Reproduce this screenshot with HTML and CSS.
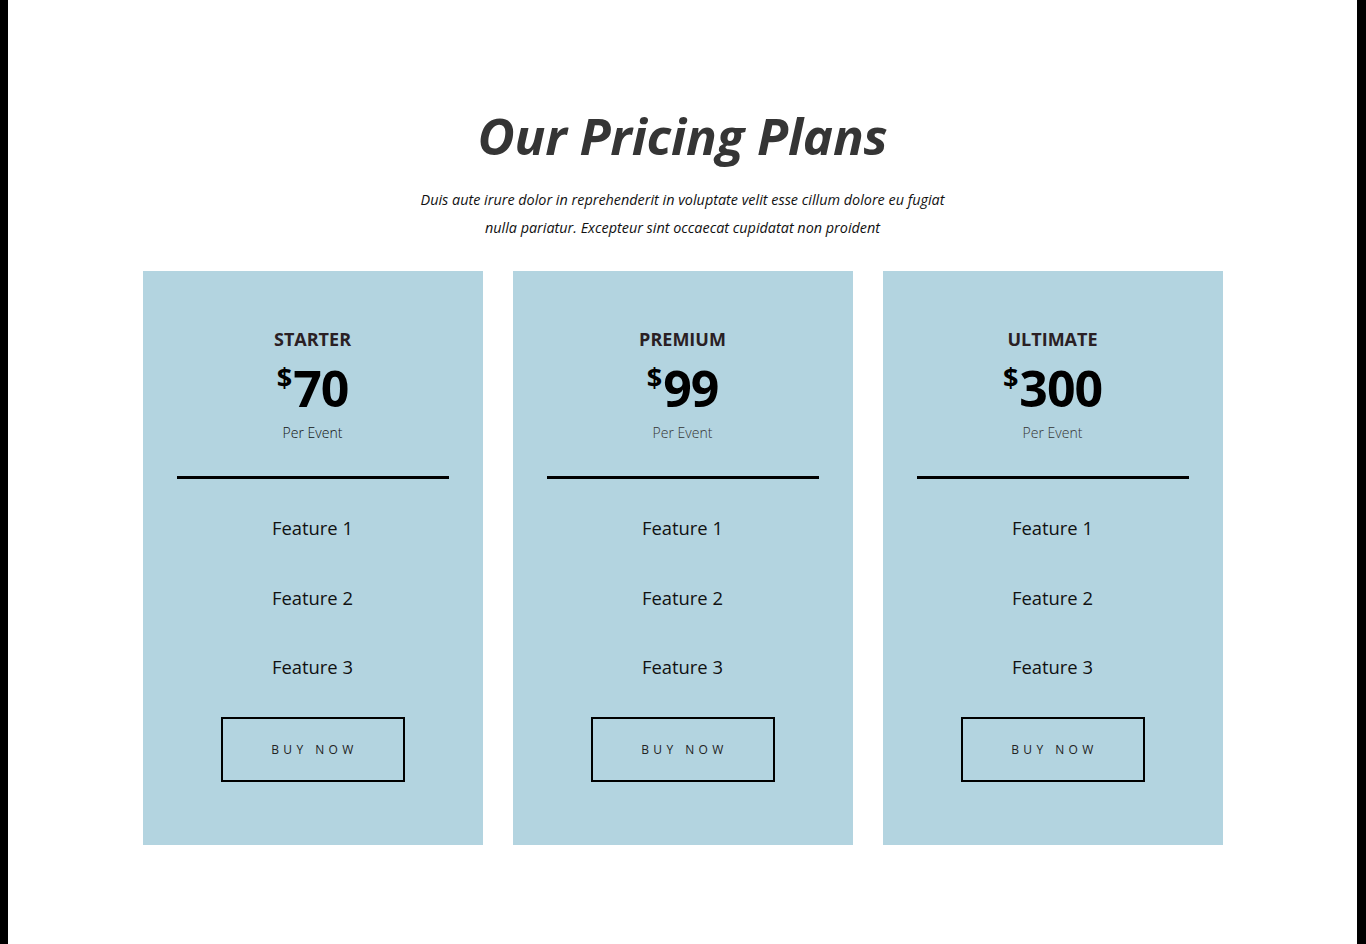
FILE: index.html
```html
<!DOCTYPE html>
<html lang="en">
<head>
<meta charset="utf-8">
<title>Our Pricing Plans</title>
<link rel="stylesheet" href="styles.css">
</head>
<body>
<section class="pricing">
  <h1 class="title">Our Pricing Plans</h1>
  <p class="subtitle">Duis aute irure dolor in reprehenderit in voluptate velit esse cillum dolore eu fugiat<br>nulla pariatur. Excepteur sint occaecat cupidatat non proident</p>
  <div class="cards">
    <div class="card">
      <h3 class="plan">STARTER</h3>
      <div class="price"><span class="cur">$</span>70</div>
      <div class="per">Per Event</div>
      <hr class="rule">
      <ul class="features">
        <li>Feature 1</li>
        <li>Feature 2</li>
        <li>Feature 3</li>
      </ul>
      <a class="btn" href="#">BUY NOW</a>
    </div>
    <div class="card">
      <h3 class="plan">PREMIUM</h3>
      <div class="price"><span class="cur">$</span>99</div>
      <div class="per per-muted">Per Event</div>
      <hr class="rule">
      <ul class="features">
        <li>Feature 1</li>
        <li>Feature 2</li>
        <li>Feature 3</li>
      </ul>
      <a class="btn" href="#">BUY NOW</a>
    </div>
    <div class="card">
      <h3 class="plan">ULTIMATE</h3>
      <div class="price"><span class="cur">$</span>300</div>
      <div class="per per-muted">Per Event</div>
      <hr class="rule">
      <ul class="features">
        <li>Feature 1</li>
        <li>Feature 2</li>
        <li>Feature 3</li>
      </ul>
      <a class="btn" href="#">BUY NOW</a>
    </div>
  </div>
</section>
</body>
</html>
```
FILE: styles.css
```css
html {
  background: #000;
  height: 100%;
}
body {
  margin: 0 9px 0 8px;
  background: #fff;
  min-height: 100%;
  font-family: "Open Sans", "Noto Sans", sans-serif;
}
.pricing {
  padding-top: 100px;
  display: flex;
  flex-direction: column;
  align-items: center;
}
.title {
  margin: 0;
  font-size: 51px;
  line-height: 70px;
  font-weight: 700;
  font-style: italic;
  color: #353535;
  letter-spacing: -0.2px;
}
.subtitle {
  margin: 16px 0 0;
  font-size: 14.4px;
  line-height: 28px;
  font-style: italic;
  color: #111;
  text-align: center;
}
.cards {
  margin-top: 29px;
  display: flex;
  gap: 30px;
}
.card {
  width: 340px;
  height: 574px;
  background: #b3d4e0;
  box-sizing: border-box;
  padding: 56px 34px 0;
  display: flex;
  flex-direction: column;
  align-items: center;
}
.plan {
  margin: 0;
  font-size: 18px;
  line-height: 24px;
  font-weight: 700;
  color: #2a2024;
}
.price {
  margin-top: 8px;
  font-size: 50px;
  line-height: 58px;
  font-weight: 700;
  color: #000;
  letter-spacing: -1px;
}
.cur {
  font-size: 27px;
  vertical-align: top;
  line-height: 36px;
  margin-right: 2px;
}
.per {
  margin-top: 6px;
  font-size: 14px;
  line-height: 20px;
  font-weight: 300;
  color: #111;
}
.per-muted {
  color: #333;
}
.rule {
  width: 100%;
  margin: 33px 0 0;
  border: 0;
  height: 3px;
  background: #000;
}
.features {
  list-style: none;
  margin: 35px 0 0;
  padding: 0;
  display: flex;
  flex-direction: column;
  align-items: center;
  gap: 41.5px;
}
.features li {
  font-size: 18.4px;
  line-height: 28px;
  color: #111;
}
.btn {
  margin-top: 36px;
  width: 184px;
  height: 65px;
  box-sizing: border-box;
  border: 2px solid #000;
  display: flex;
  align-items: center;
  justify-content: center;
  font-size: 12px;
  font-weight: 400;
  letter-spacing: 4.4px;
  padding-left: 4px;
  color: #222;
  text-decoration: none;
}
```
